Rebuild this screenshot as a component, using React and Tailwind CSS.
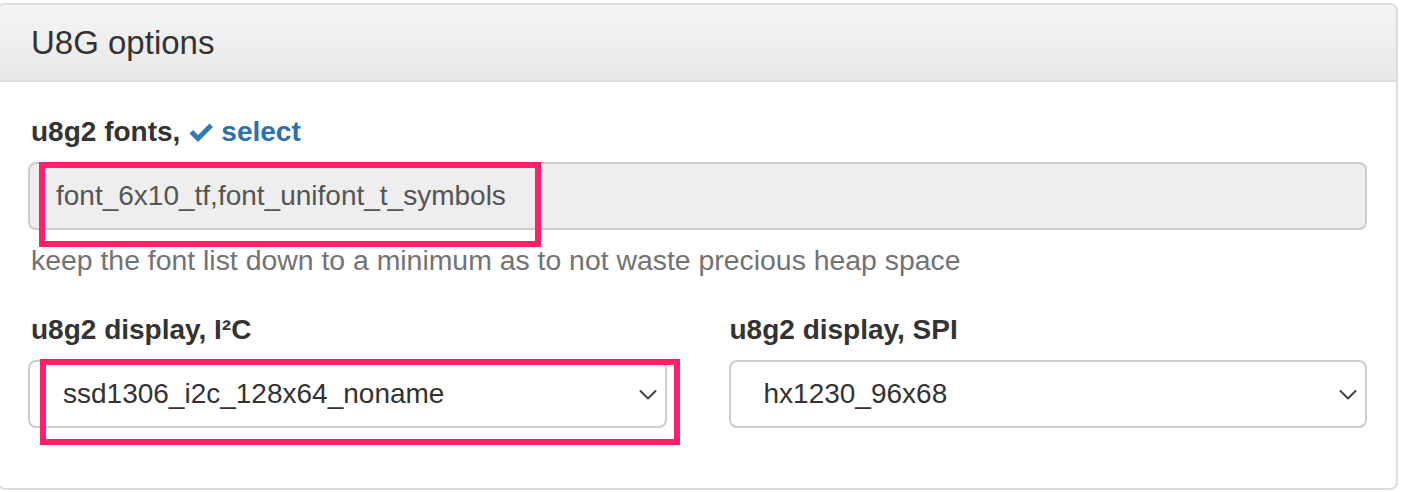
import React from 'react';

const font = { fontFamily: '"Liberation Sans", Arial, Helvetica, sans-serif' };

function Chevron() {
    return (
        <svg className="absolute right-[8px] top-[27px] h-[12px] w-[18px]" viewBox="0 0 18 12" fill="none">
            <path d="M1.5 2 L9 9.5 L16.5 2" stroke="#444" strokeWidth="2" strokeLinecap="round" strokeLinejoin="round" />
        </svg>
    );
}

function SelectBox({ value }) {
    return (
        <div className="relative h-[68px] rounded-[8px] border-2 border-[#ccc] bg-white flex items-center pl-[33px] pr-[40px] text-[28px] text-[#333]">
            {value}
            <Chevron />
        </div>
    );
}

export default function App() {
    return (
        <div className="min-h-screen bg-white overflow-hidden text-[#333]" style={font}>
            <div className="relative ml-[-3px] mt-[3px] w-[1401px] rounded-[8px] border-2 border-[#dddddd] bg-white">
                {/* heading */}
                <div className="h-[77px] flex items-center px-[32px] rounded-t-[6px] border-b-2 border-[#dddddd] bg-gradient-to-b from-[#f5f5f5] to-[#e8e8e8]">
                    <h3 className="text-[33px] leading-none text-[#333]">U8G options</h3>
                </div>

                {/* body */}
                <div className="px-[29px] pt-[30px] pb-[30px]">
                    <div className="mb-[30px]">
                        <label className="flex items-center h-[40px] mb-[10px] text-[28px] font-bold pl-[3px]">
                            u8g2 fonts,
                            <svg className="ml-[9px] mr-[8px] h-[22px] w-[24px]" viewBox="0 0 24 22">
                                <path d="M0.5 12.5 L4 9 L9 14 L20.5 2.5 L24 6 L9 21 Z" fill="#337ab7" />
                            </svg>
                            <span className="text-[#2d6fb0]">select</span>
                        </label>
                        <div className="h-[68px] rounded-[8px] border-2 border-[#cccccc] bg-[#eeeeee] flex items-center px-[26px] text-[28px] text-[#555]">
                            font_6x10_tf,font_unifont_t_symbols
                        </div>
                        <p className="mt-[10px] h-[40px] flex items-center text-[28.4px] text-[#737373] pl-[3px]">
                            keep the font list down to a minimum as to not waste precious heap space
                        </p>
                    </div>

                    <div className="grid grid-cols-2 gap-x-[62px] mb-[30px]">
                        <div>
                            <label className="flex items-center h-[40px] mb-[10px] text-[28px] font-bold pl-[3px]">u8g2 display, I²C</label>
                            <SelectBox value="ssd1306_i2c_128x64_noname" />
                        </div>
                        <div>
                            <label className="flex items-center h-[40px] mb-[10px] text-[28px] font-bold pl-[1px]">u8g2 display, SPI</label>
                            <SelectBox value="hx1230_96x68" />
                        </div>
                    </div>
                </div>
            </div>

            {/* annotation boxes */}
            <div className="absolute left-[39px] top-[162px] w-[502px] h-[85px] border-[6px] border-[#ff2168]" />
            <div className="absolute left-[40px] top-[359px] w-[640px] h-[86px] border-[6px] border-[#ff2168]" />
        </div>
    );
}
